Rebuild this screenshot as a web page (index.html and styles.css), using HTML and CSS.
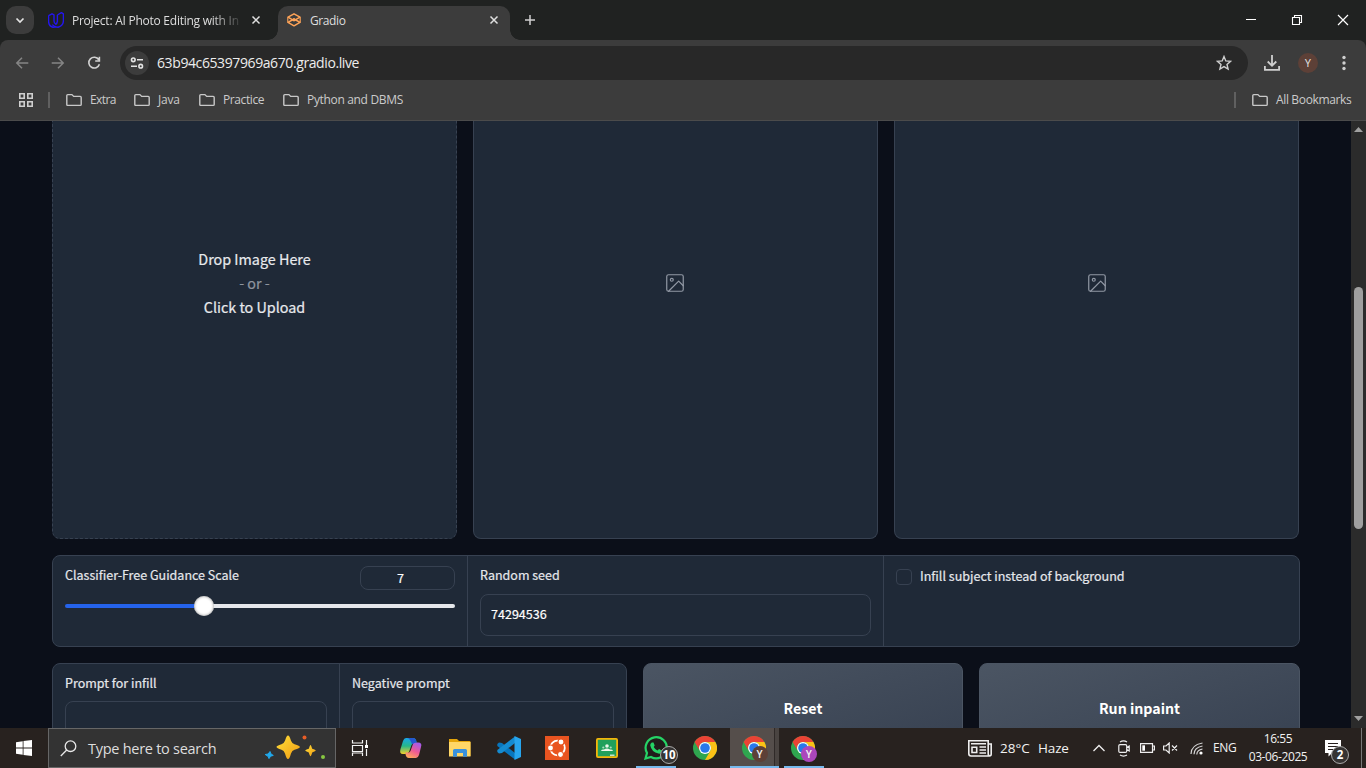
FILE: index.html
```html
<!DOCTYPE html>
<html lang="en">
<head>
<meta charset="utf-8">
<title>Gradio</title>
<link rel="stylesheet" href="styles.css">
</head>
<body>
<svg class="defs" width="0" height="0" aria-hidden="true">
  <defs>
    <linearGradient id="gold" x1="0" y1="0" x2="1" y2="1"><stop offset="0" stop-color="#ffe03a"/><stop offset="1" stop-color="#ef9a12"/></linearGradient>
    <linearGradient id="copA" x1="0" y1="0" x2="0" y2="1"><stop offset="0" stop-color="#19a6e8"/><stop offset=".5" stop-color="#26b78a"/><stop offset="1" stop-color="#f4d12b"/></linearGradient>
    <linearGradient id="copB" x1="0.7" y1="0" x2="0.2" y2="1"><stop offset="0" stop-color="#a55bea"/><stop offset=".5" stop-color="#ee5a94"/><stop offset="1" stop-color="#ffad57"/></linearGradient>
    <symbol id="folder" viewBox="0 0 16 14"><path d="M.8 2.6Q.8 1.6 1.8 1.6H5.9L7.7 3.4H14.2Q15.2 3.4 15.2 4.4V11.4Q15.2 12.4 14.2 12.4H1.8Q.8 12.4.8 11.4Z" fill="none" stroke="#c8c8c8" stroke-width="1.4"/></symbol>
    <symbol id="close" viewBox="0 0 10 10"><path d="M1.5 1.5L8.5 8.5M8.5 1.5L1.5 8.5" stroke="#e0e0e0" stroke-width="1.5"/></symbol>
    <symbol id="picture" viewBox="0 0 24 24"><g fill="none" stroke="#9299a5" stroke-width="1.3" stroke-linecap="round" stroke-linejoin="round"><rect x="3" y="3" width="18" height="18" rx="2"/><circle cx="8.5" cy="8.5" r="1.6"/><path d="M21 15L16 10L5 21"/></g></symbol>
    <symbol id="chrome" viewBox="0 0 24 24"><circle cx="12" cy="12" r="12" fill="#2fa64f"/><path d="M1.6 6A12 12 0 0 1 22.4 6H12A6 6 0 0 0 6.8 15Z" fill="#ea4335"/><path d="M22.4 6A12 12 0 0 1 12 24L17.2 15A6 6 0 0 0 12 6Z" fill="#fbc116"/><circle cx="12" cy="12" r="6" fill="#fff"/><circle cx="12" cy="12" r="4.8" fill="#2878eb"/></symbol>
  </defs>
</svg>

<header class="tabstrip">
  <button class="tab-search"><svg width="10" height="7" viewBox="0 0 10 7"><path d="M1.5 1.5L5 5L8.5 1.5" fill="none" stroke="#e4e4e4" stroke-width="1.7"/></svg></button>
  <div class="tab tab-idle">
    <svg width="16" height="16" viewBox="0 0 16 16"><path d="M.6 3.6L4 1.8L6 2.9V9Q6 11.2 8 12.3M.6 3.6V9.6Q.8 14.2 5 15.2Q6.8 15.2 8 14.4M9.4 3L13.4.7L15.4 1.9V8.8Q15.2 13.8 10 15.2Q6.4 15 4.2 12.6M9.4 3V9.4Q9.2 11.6 7.4 12.6" fill="none" stroke="#2416ef" stroke-width="1.4" stroke-linejoin="round"/></svg>
    <span class="tab-title fade">Project: AI Photo Editing with In</span>
    <svg class="tab-close" width="10" height="10"><use href="#close"/></svg>
  </div>
  <div class="tab tab-active">
    <svg width="16" height="16" viewBox="0 0 16 16"><g fill="none" stroke="#ffa458" stroke-linejoin="round"><path d="M8 1.8L14 5.2L8 8.6L2 5.2Z" stroke-width="1.5"/><path d="M8 7L14 10.4L8 13.8L2 10.4Z" stroke-width="1.5"/><path d="M1.8 5.2V10.4M14.2 5.2V10.4" stroke-width="1.1"/></g><circle cx="8" cy="7.8" r="1.5" fill="#ffa458"/></svg>
    <span class="tab-title">Gradio</span>
    <svg class="tab-close" width="10" height="10"><use href="#close"/></svg>
  </div>
  <svg class="new-tab" width="12" height="12" viewBox="0 0 12 12"><path d="M6 1V11M1 6H11" stroke="#d0d0d0" stroke-width="1.5"/></svg>
  <div class="window-controls">
    <svg width="12" height="12" viewBox="0 0 12 12"><path d="M1 5.5H11" stroke="#fff"/></svg>
    <svg width="12" height="12" viewBox="0 0 12 12"><path d="M1.5 3.5H8.5V10.5H1.5ZM3.5 3.5V1.5H10.5V8.5H8.5" fill="none" stroke="#fff" stroke-width="1.1"/></svg>
    <svg width="12" height="12" viewBox="0 0 12 12"><path d="M1 1L11 11M11 1L1 11" stroke="#fff" stroke-width="1.2"/></svg>
  </div>
</header>

<section class="browser-bar">
  <div class="toolbar">
    <div class="nav-buttons">
      <svg width="14" height="14" viewBox="0 0 14 14"><path d="M13.3 7H2M7 1.8L1.8 7L7 12.2" fill="none" stroke="#858585" stroke-width="1.5"/></svg>
      <svg width="14" height="14" viewBox="0 0 14 14"><path d="M.7 7H12M7 1.8L12.2 7L7 12.2" fill="none" stroke="#858585" stroke-width="1.5"/></svg>
      <svg width="14" height="14" viewBox="0 0 14 14"><path d="M11.8 3.7A5.4 5.4 0 1 0 12.4 8.2M12.4.8V5H8.2" fill="none" stroke="#d2d2d2" stroke-width="1.6"/></svg>
    </div>
    <div class="omnibox">
      <span class="site-info"><svg width="14" height="12" viewBox="0 0 14 12"><g fill="none" stroke="#e3e3e3" stroke-width="1.6"><circle cx="3.3" cy="2.8" r="1.8"/><path d="M7 2.8H13M1 9.2H7"/><circle cx="10.7" cy="9.2" r="1.8"/></g></svg></span>
      <span class="url">63b94c65397969a670.gradio.live</span>
      <svg class="star" width="16" height="16" viewBox="0 0 16 16"><path d="M8 1.5L9.8 5.9L14.6 6.3L11 9.4L12.1 14L8 11.6L3.9 14L5 9.4L1.4 6.3L6.2 5.9Z" fill="none" stroke="#cfcfcf" stroke-width="1.4"/></svg>
    </div>
    <svg class="download" width="18" height="18" viewBox="0 0 18 18"><path d="M9 1V11.5M4.7 7.5L9 11.7L13.3 7.5M1.9 12V15.9H16.1V12" fill="none" stroke="#cfcfcf" stroke-width="1.8"/></svg>
    <span class="profile">Y</span>
    <svg class="kebab" width="4" height="16" viewBox="0 0 4 16"><g fill="#cfcfcf"><circle cx="2" cy="2.5" r="1.7"/><circle cx="2" cy="8" r="1.7"/><circle cx="2" cy="13.5" r="1.7"/></g></svg>
  </div>
  <nav class="bookmarks">
    <svg class="apps" width="14" height="14" viewBox="0 0 14 14"><path d="M.8.8H5.2V5.2H.8ZM8.8.8H13.2V5.2H8.8ZM.8 8.8H5.2V13.2H.8ZM8.8 8.8H13.2V13.2H8.8Z" fill="none" stroke="#cfcfcf" stroke-width="1.6"/></svg>
    <i class="bar-divider"></i>
    <span class="bookmark bm-extra"><svg width="16" height="14"><use href="#folder"/></svg><span>Extra</span></span>
    <span class="bookmark bm-java"><svg width="16" height="14"><use href="#folder"/></svg><span>Java</span></span>
    <span class="bookmark bm-practice"><svg width="16" height="14"><use href="#folder"/></svg><span>Practice</span></span>
    <span class="bookmark bm-python"><svg width="16" height="14"><use href="#folder"/></svg><span>Python and DBMS</span></span>
    <i class="bar-divider divider-end"></i>
    <span class="bookmark bm-all"><svg width="16" height="14"><use href="#folder"/></svg><span>All Bookmarks</span></span>
  </nav>
</section>

<div class="viewport">
  <main class="page">
    <div class="images">
      <div class="image-card upload">
        <div class="line drop">Drop Image Here</div>
        <div class="line or">- or -</div>
        <div class="line click">Click to Upload</div>
      </div>
      <div class="image-card"><svg width="22" height="22"><use href="#picture"/></svg></div>
      <div class="image-card"><svg width="22" height="22"><use href="#picture"/></svg></div>
    </div>
    <div class="settings">
      <div class="block">
        <div class="slider-head"><span class="label">Classifier-Free Guidance Scale</span><span class="number">7</span></div>
        <div class="slider"><span class="thumb"></span></div>
      </div>
      <div class="block">
        <div class="label">Random seed</div>
        <div class="field"><span>74294536</span></div>
      </div>
      <div class="block check-block"><span class="checkbox"></span><span class="label check-label">Infill subject instead of background</span></div>
    </div>
    <div class="actions">
      <div class="prompts">
        <div class="block"><div class="label">Prompt for infill</div><div class="field"></div></div>
        <div class="block"><div class="label">Negative prompt</div><div class="field"></div></div>
      </div>
      <button class="action reset"><span>Reset</span></button>
      <button class="action run"><span>Run inpaint</span></button>
    </div>
  </main>
  <aside class="scrollbar">
    <svg width="9" height="5" viewBox="0 0 9 5"><path d="M0 5L4.5 0L9 5Z" fill="#a0a0a0"/></svg>
    <i class="scroll-thumb"></i>
    <svg width="9" height="5" viewBox="0 0 9 5"><path d="M0 0L4.5 5L9 0Z" fill="#a0a0a0"/></svg>
  </aside>
</div>

<footer class="taskbar">
  <div class="start"><svg width="16" height="16" viewBox="0 0 16 16"><path d="M0 2.3L6.7 1.3V7.6H0ZM7.5 1.1L16 0V7.6H7.5ZM0 8.4H6.7V14.7L0 13.7ZM7.5 8.4H16V16L7.5 14.9Z" fill="#fff"/></svg></div>
  <div class="search">
    <svg width="17" height="17" viewBox="0 0 17 17"><circle cx="10.5" cy="6.2" r="5.3" fill="none" stroke="#e8e8e8" stroke-width="1.3"/><path d="M6.7 10L.8 16" stroke="#e8e8e8" stroke-width="1.3"/></svg>
    <span class="search-text">Type here to search</span>
    <svg class="sparkles" width="62" height="26" viewBox="0 0 62 26">
      <path d="M24 .5Q25.5.5 27 5.8Q28 8.5 30.5 9.3Q36 11 36 12Q36 13.2 30.5 14.7Q28 15.5 27 18.5Q25.5 24 24 24Q22.5 24 21 18.5Q20 15.5 17.5 14.7Q12.5 13.2 12.5 12Q12.5 10.8 17.5 9.3Q20 8.5 21 5.8Q22.5.5 24 .5Z" fill="url(#gold)"/>
      <path d="M46.5 10Q47.1 10 48.2 13.8Q51.8 15 51.8 15.6Q51.8 16.3 48.2 17.4Q47.1 21.2 46.5 21.2Q45.9 21.2 44.8 17.4Q41.2 16.3 41.2 15.6Q41.2 15 44.8 13.8Q45.9 10 46.5 10Z" fill="url(#gold)"/>
      <path d="M6 16.5L7 19L9.3 20.4L6.6 21.2L5 23.6L4 21.3L1.2 19.5L4.2 19Z" fill="#21a9ec" stroke="#21a9ec" stroke-linejoin="round"/>
      <circle cx="40.5" cy="2.6" r="2" fill="#e85d26"/><circle cx="59" cy="22" r="2" fill="#87c742"/>
    </svg>
  </div>
  <div class="tasks">
    <div class="task task-view"><svg width="18" height="17" viewBox="0 0 18 17"><path d="M1.5 0V3H11.5V0M1.5 16V13H11.5V16M1.5 5.5H11.5V11.5H1.5ZM15.5 0V5M15.5 9V16" fill="none" stroke="#f2f2f2" stroke-width="1.2"/><rect x="14" y="5" width="3" height="3" fill="#fff"/></svg></div>
    <div class="task nudged"><svg width="24" height="22" viewBox="0 0 24 22"><path d="M7 1H14Q17 1 17.5 5L17 7Q14 5 12.5 8L10 15Q9 17 6 17H4Q0 17 1.5 12L4 4Q5 1 7 1Z" fill="url(#copA)"/><path d="M8 1H14Q17 1 17.5 5L17 7H13L11 3Q10 1 8 1Z" fill="#2458cf"/><path d="M17 21H10Q7 21 6.5 17L7 15Q10 17 11.5 14L14 7Q15 5.5 18 5.5H19Q23.5 5.5 22 10L20 18Q19 21 17 21Z" fill="url(#copB)"/></svg></div>
    <div class="task nudged"><svg width="22" height="20" viewBox="0 0 22 20"><path d="M0 1H8L10 3H20.5Q21.5 3 21.5 4V18H0Z" fill="#e5a50a"/><path d="M0 4H21.5V18.5H0Z" fill="#ffd767"/><path d="M4 18.7V12.5Q4 11 5.5 11H16.5Q18 11 18 12.5V18.7H14V15H8V18.7Z" fill="#3a92dc"/></svg></div>
    <div class="task nudged"><svg width="24" height="24" viewBox="0 0 24 24"><path d="M.3 8L2 6.5L5 7L18 17V23.5L.3 10Z" fill="#0876bd"/><path d="M.3 16L2 17.5L5 17L18 7V.5L.3 14Z" fill="#158bd0"/><path d="M17.5 0L24 3V21L17.5 24Z" fill="#27a5ed"/></svg></div>
    <div class="task"><svg width="24" height="24" viewBox="0 0 24 24"><path d="M0 0H24V24H0Z" fill="#e95420"/><circle cx="12.5" cy="12" r="7.3" fill="none" stroke="#fff" stroke-width="1.8"/><g fill="#fff" stroke="#e95420" stroke-width="1.1"><circle cx="5.5" cy="12" r="3"/><circle cx="16" cy="6" r="3"/><circle cx="15.5" cy="18.5" r="3"/></g></svg></div>
    <div class="task"><svg width="22" height="20" viewBox="0 0 22 20"><rect x=".9" y=".9" width="20.2" height="18.2" rx="1" fill="#20a05b" stroke="#f4b70a" stroke-width="1.8"/><g fill="#eaf6e9"><circle cx="11" cy="8" r="1.8"/><circle cx="7.3" cy="9.5" r="1.1" opacity=".7"/><circle cx="14.7" cy="9.5" r="1.1" opacity=".7"/><path d="M5 13Q5.5 11.3 8 11.6Q11 9.5 14 11.6Q16.5 11.3 17 13Z"/><path d="M14 16.5H18.5V18H14Z" opacity=".8"/></g></svg></div>
    <div class="task running"><svg width="24" height="24" viewBox="0 0 24 24"><path d="M1.5 22.5L3 17A10.6 10.6 0 1 1 7 21Z" fill="#211d1b" stroke="#25d366" stroke-width="2.2"/><path d="M7.8 6.5H9.5L10.7 9.5L9.7 11Q11 13.5 13.5 14.4L15 13L18 14.5Q17.5 18 14.5 17.6Q7.5 16 6.2 9.2Q6.2 7.5 7.8 6.5Z" fill="#25d366"/></svg><span class="count-badge">10</span></div>
    <div class="task"><svg width="24" height="24"><use href="#chrome"/></svg></div>
    <div class="task running current"><svg width="24" height="24"><use href="#chrome"/></svg><span class="profile-badge brown">Y</span></div>
    <div class="task running"><svg width="24" height="24"><use href="#chrome"/></svg><span class="profile-badge purple">Y</span></div>
  </div>
  <div class="tray">
    <svg class="news" width="24" height="17" viewBox="0 0 24 17"><g fill="none" stroke="#eee" stroke-width="1.6"><path d="M.8.8H20.2V13.5Q20.2 16 22 16H3Q.8 16 .8 13.5ZM20.2 4H23.2V14Q23.2 16 21.5 16M3 3.8H18M11.5 7H18M11.5 10H18M11.5 13H18"/><path d="M4 7.3H8.7V12.5H4Z"/></g></svg>
    <span class="temp">28°C</span><span class="haze">Haze</span>
    <svg class="chevron" width="14" height="8" viewBox="0 0 14 8"><path d="M1.5 7L7 1.5L12.5 7" fill="none" stroke="#eee" stroke-width="1.3"/></svg>
    <svg class="meet" width="12" height="17" viewBox="0 0 12 17"><g fill="none" stroke="#eee" stroke-width="1.2"><path d="M2 4.6H7.5Q8.7 4.6 8.7 5.8V11.2Q8.7 12.4 7.5 12.4H2Q.8 12.4.8 11.2V5.8Q.8 4.6 2 4.6ZM8.7 7.5L11.2 6V11L8.7 9.5M2 1.9Q5.5-.2 9 1.9M2 15.1Q5.5 17.2 9 15.1"/></g></svg>
    <svg class="battery" width="15" height="10" viewBox="0 0 15 10"><path d="M.6.6H12.5V9.4H.6ZM12.5 3H14.4V7H12.5" fill="none" stroke="#eee" stroke-width="1.2"/><path d="M2.3 2.3H5V7.7H2.3Z" fill="#fff"/></svg>
    <svg class="volume" width="15" height="12" viewBox="0 0 15 12"><path d="M.6 4H3L6.2 1V11L3 8H.6ZM9 3.5L14 8.5M14 3.5L9 8.5" fill="none" stroke="#eee" stroke-width="1.2"/></svg>
    <svg class="wifi" width="13" height="13" viewBox="0 0 13 13"><g fill="none" stroke="#d5d5d5" stroke-width="1.2"><path d="M1 12Q1 3 12.5 1"/><path d="M4 12.3Q4 5.5 12.5 4"/><path d="M6.8 12.5Q7 8 12.5 7"/></g><circle cx="11" cy="11" r="1.6" fill="#fff"/></svg>
    <span class="lang">ENG</span>
    <div class="clock"><span class="time">16:55</span><span class="date">03-06-2025</span></div>
    <div class="notice"><svg width="16" height="17" viewBox="0 0 16 17"><path d="M0 0H16V13H7L3.5 16.5V13H0Z" fill="#fff"/><path d="M3 3.5H13M3 6.5H13M3 9.5H10" stroke="#28211f"/></svg><span class="count-badge">2</span></div>
    <i class="desktop-edge"></i>
  </div>
</footer>
</body>
</html>
```
FILE: styles.css
```css
* { box-sizing: border-box; }
body { margin: 0; width: 1366px; height: 768px; overflow: hidden; display: flex; flex-direction: column; background: #202221; font-family: "Open Sans", "Noto Sans", sans-serif; font-size: 12px; color: #dedede; white-space: nowrap; }
svg { display: block; flex: none; }
button { border: 0; padding: 0; color: inherit; font: inherit; }
.defs { position: absolute; }

.tabstrip { height: 40px; flex: none; display: flex; align-items: center; background: #202221; padding-left: 6px; }
.tab-search { width: 28px; height: 28px; border-radius: 10px; background: #3c3c3c; display: grid; place-items: center; }
.tab { display: flex; align-items: center; }
.tab-idle { width: 244px; padding-left: 14px; }
.tab-title { margin-left: 8px; flex: 1; }
.fade { letter-spacing: -.25px; margin-right: 12px; -webkit-mask-image: linear-gradient(90deg, #000 84%, transparent 103%); mask-image: linear-gradient(90deg, #000 84%, transparent 103%); }
.tab-idle .tab-close { margin-right: 17px; }
.tab-active { width: 232px; height: 34px; align-self: flex-end; background: #3c3c3c; border-radius: 10px 10px 0 0; padding: 0 11px 6px 8px; position: relative; }
.tab-active .tab-title { letter-spacing: -.4px; }
.tab-active::before, .tab-active::after { content: ""; position: absolute; bottom: 0; width: 10px; height: 10px; }
.tab-active::before { left: -10px; background: radial-gradient(circle at 0 0, transparent 9.5px, #3c3c3c 10px); }
.tab-active::after { right: -10px; background: radial-gradient(circle at 100% 0, transparent 9.5px, #3c3c3c 10px); }
.new-tab { margin-left: 14px; }
.window-controls { margin-left: auto; display: flex; gap: 34px; padding-right: 17px; }

.browser-bar { height: 81px; flex: none; background: #3c3c3c; border-radius: 8px 8px 0 0; border-bottom: 1px solid #4b4b4b; }
.toolbar { height: 40px; padding-top: 6px; display: flex; align-items: center; }
.nav-buttons { width: 120px; display: flex; gap: 22px; padding-left: 15px; }
.omnibox { width: 1128px; height: 34px; border-radius: 17px; background: #282828; display: flex; align-items: center; padding-left: 5px; padding-right: 16px; }
.site-info { width: 24px; height: 24px; border-radius: 50%; background: #3c3c3c; display: grid; place-items: center; }
.url { font-size: 14px; margin-left: 8px; padding-bottom: 1px; letter-spacing: -.4px; color: #ededed; }
.star { margin-left: auto; }
.download { margin-left: 15px; }
.profile { width: 20px; height: 20px; border-radius: 50%; background: #5d4037; margin-left: 17px; display: grid; place-items: center; font-size: 10.5px; font-family: Roboto, sans-serif; }
.kebab { margin-left: 24px; }
.bookmarks { height: 40px; display: flex; align-items: center; padding-left: 19px; color: #cbcbcb; }
.bar-divider { width: 2px; height: 16px; background: #606060; margin-left: 15px; }
.bookmark { display: flex; align-items: center; gap: 8px; }
.bookmark span { padding-bottom: 1px; }
.bm-extra { margin-left: 16px; width: 68px; letter-spacing: -.6px; }
.bm-java { width: 65px; letter-spacing: -.2px; }
.bm-practice { width: 84px; letter-spacing: -.4px; }
.bm-python { letter-spacing: -.33px; }
.divider-end { margin-left: auto; }
.bm-all { margin-left: 16px; width: 114px; letter-spacing: -.35px; }

.viewport { height: 607px; flex: none; display: flex; overflow: hidden; background: #0b0f19; font-family: "Noto Sans CJK SC", sans-serif; -webkit-text-stroke: .2px currentColor; }
.page { width: 1351px; padding-left: 52px; display: flex; flex-direction: column; gap: 16px; }
.images { display: flex; gap: 16px; height: 418px; flex: none; }
.image-card { width: 405px; background: #1f2937; border: 1px solid #374151; border-top: 0; border-radius: 0 0 8px 8px; display: flex; flex-direction: column; align-items: center; padding-top: 151px; }
.image-card:nth-child(2) { padding-right: 1px; }
.upload { border-style: dashed; padding-top: 126px; font-size: 14.35px; color: #e8eaed; }
.line { height: 24px; line-height: 23px; }
.or { color: #8f959f; }
.settings { width: 1248px; height: 92px; flex: none; display: grid; grid-template-columns: 415px 416px 1fr; border: 1px solid #374151; border-radius: 8px; background: #1f2937; }
.block { padding: 9px 12px; border-right: 1px solid #374151; }
.settings .block:last-child, .prompts .block:last-child { border-right: 0; }
.label { font-size: 12.5px; line-height: 20px; color: #e5e7eb; }
.slider-head { display: flex; justify-content: space-between; height: 25px; }
.number { width: 95px; height: 24px; margin-top: 1px; border: 1px solid #374151; border-radius: 8px; font-size: 12.6px; line-height: 22px; padding-right: 14px; text-align: center; color: #fff; }
.slider { width: 390px; height: 4px; margin-top: 14px; border-radius: 2px; background: linear-gradient(90deg, #2563eb 36%, #e5e7eb 36%); position: relative; }
.thumb { position: absolute; left: 129px; top: -8px; width: 20px; height: 20px; border-radius: 50%; background: #fff; box-shadow: inset 0 0 3px #888; }
.field { height: 42px; margin-top: 9px; border: 1px solid #374151; border-radius: 8px; padding: 0 10px; font-size: 12.55px; line-height: 38px; color: #fff; }
.check-block { display: flex; gap: 8px; }
.checkbox { width: 16px; height: 16px; margin-top: 4px; border: 1px solid #374151; border-radius: 4px; }
.check-label { font-size: 12.55px; line-height: 22px; }
.actions { display: flex; gap: 16px; height: 120px; flex: none; }
.prompts { width: 575px; display: grid; grid-template-columns: 287px 1fr; background: #1f2937; border: 1px solid #374151; border-radius: 8px; }
.prompts .field { height: 60px; margin-top: 8px; }
.action { height: 91px; padding-bottom: 2px; border: 1px solid #4b5563; border-radius: 8px; background: linear-gradient(160deg, #4b5563, #374151); color: #fff; font-size: 14.2px; font-weight: 700; -webkit-text-stroke: 0; }
.reset { width: 320px; }
.run { width: 321px; }
.scrollbar { width: 15px; background: #2b2b2b; display: flex; flex-direction: column; align-items: center; padding: 6px 0 7px; }
.scroll-thumb { width: 9px; height: 242px; border-radius: 5px; background: #9f9f9f; margin: 155px 0 auto; }

.taskbar { height: 40px; flex: none; display: flex; background: #28221f; color: #f2f2f2; }
.start { width: 48px; display: grid; place-items: center; }
.search { width: 288px; border: 1px solid #666; background: #333; display: flex; align-items: center; padding-left: 11px; }
.search-text { margin-left: 11px; font-size: 14.5px; letter-spacing: -.27px; color: #dedede; width: 176px; }
.tasks { display: flex; }
.task { width: 49.2px; display: grid; place-items: center; position: relative; }
.task-view { padding-right: 2px; }
.nudged { padding-left: 2px; }
.running::after { content: ""; position: absolute; left: 5px; right: 4px; bottom: 0; height: 2px; background: #76b9ed; }
.current { background: linear-gradient(90deg, #554e4b 44px, #302a28 44px, #302a28 45px, #4a4441 45px); }
.current::after { left: 0; right: 0; }
.count-badge { position: absolute; left: 29px; top: 18px; min-width: 18px; height: 18px; border: 1px solid #aaa; border-radius: 9px; background: #363433; font: 700 11.5px/15px "Open Sans", sans-serif; text-align: center; color: #fff; }
.profile-badge { position: absolute; left: 22px; top: 18px; width: 16px; height: 16px; border-radius: 50%; display: grid; place-items: center; font: 500 10px Roboto, sans-serif; }
.brown { background: #5d4037; }
.purple { background: #ab47bc; }
.tray { margin-left: auto; width: 398px; display: flex; align-items: center; }
.temp { width: 38px; font-size: 13.5px; margin-left: 8px; }
.haze { width: 54px; font-size: 13.5px; letter-spacing: -.15px; }
.meet { margin-left: 12px; }
.battery { margin-left: 10px; }
.volume { margin-left: 8px; }
.wifi { margin-left: 12px; }
.lang { width: 28px; margin-left: 10px; padding-bottom: 1px; letter-spacing: -.35px; }
.clock { width: 74px; display: flex; flex-direction: column; align-items: center; line-height: 18px; letter-spacing: -.4px; }
.date { letter-spacing: -.4px; }
.notice { position: relative; width: 28px; height: 40px; padding-top: 12px; margin-left: 10px; }
.notice .count-badge { left: 6px; top: 18px; }
.desktop-edge { width: 1px; height: 40px; background: #777; margin-left: auto; margin-right: 4px; }
```
